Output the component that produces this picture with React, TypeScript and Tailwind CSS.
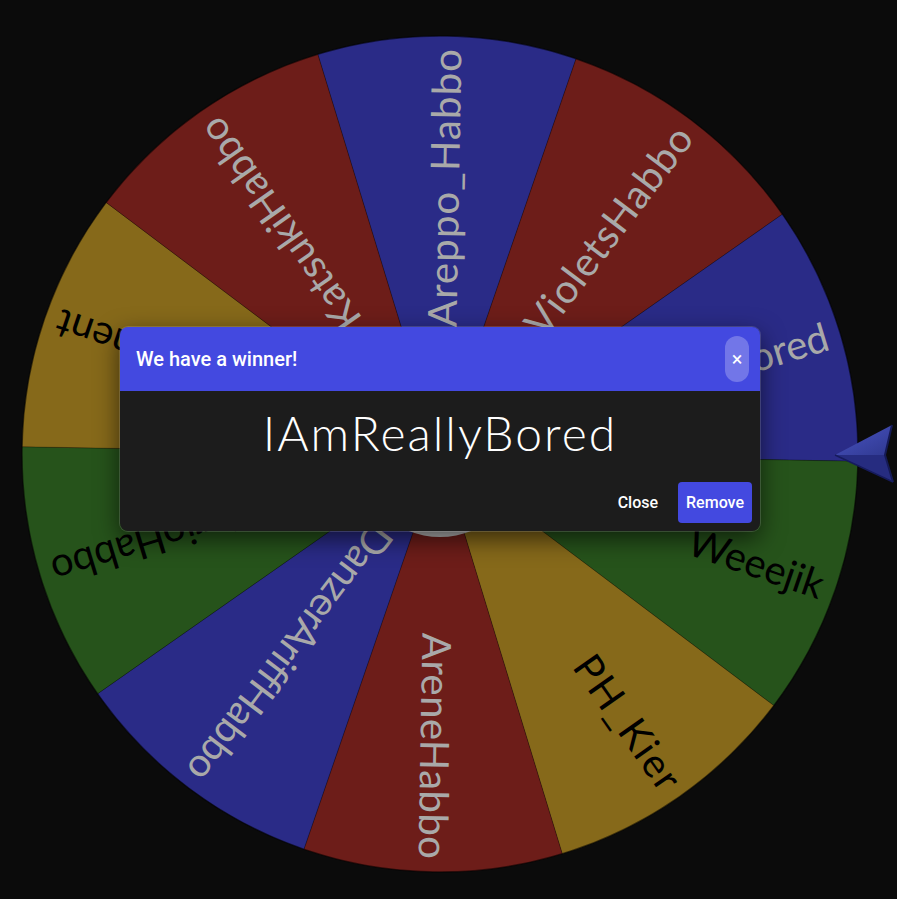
import React from "react";

type Slice = { name: string; fill: string; ink: string; len?: number };

const BLUE = "#2a2b87";
const RED = "#6d1d19";
const GREEN = "#26531b";
const GOLD = "#86691a";
const LIGHT = "#a9a9a9";
const DARK = "#000000";

const slices: Slice[] = [
  { name: "Areppo_Habbo", fill: BLUE, ink: LIGHT, len: 278 },
  { name: "VioletsHabbo", fill: RED, ink: LIGHT, len: 250 },
  { name: "IAmReallyBored", fill: BLUE, ink: LIGHT },
  { name: "Weeejik", fill: GREEN, ink: DARK, len: 141 },
  { name: "PH_Kier", fill: GOLD, ink: DARK, len: 155 },
  { name: "AreneHabbo", fill: RED, ink: LIGHT, len: 226 },
  { name: "DanzerAriffHabbo", fill: BLUE, ink: LIGHT, len: 312 },
  { name: "MarioHabbo", fill: GREEN, ink: DARK },
  { name: "Prominent", fill: GOLD, ink: DARK },
  { name: "KatsukiHabbo", fill: RED, ink: LIGHT, len: 250 },
];

const CX = 440;
const CY = 454;
const R = 418;
const STEP = 360 / slices.length;
const START = 89; // centre angle of the first slice, degrees, counter-clockwise from +x

const pt = (deg: number, r: number) => {
  const a = (deg * Math.PI) / 180;
  return [CX + r * Math.cos(a), CY - r * Math.sin(a)];
};

function Wheel() {
  return (
    <svg
      width={897}
      height={899}
      viewBox="0 0 897 899"
      className="block [font-family:Lato,sans-serif]"
    >
      {slices.map((s, i) => {
        const mid = START - STEP * i;
        const [x1, y1] = pt(mid + STEP / 2, R);
        const [x2, y2] = pt(mid - STEP / 2, R);
        return (
          <path
            key={s.name}
            d={`M${CX} ${CY} L${x1} ${y1} A${R} ${R} 0 0 1 ${x2} ${y2} Z`}
            fill={s.fill}
            stroke="rgba(0,0,0,0.22)"
            strokeWidth={1}
          />
        );
      })}
      {slices.map((s, i) => {
        const mid = START - STEP * i;
        return (
          <text
            key={s.name + "-label"}
            transform={`translate(${CX} ${CY}) rotate(${-mid})`}
            x={405}
            y={0}
            dy="0.36em"
            textAnchor="end"
            fontSize={40}
            fill={s.ink}
            textLength={s.len}
            lengthAdjust="spacing"
          >
            {s.name}
          </text>
        );
      })}
      <circle cx={CX} cy={CY} r={R} fill="none" stroke="rgba(0,0,0,0.4)" strokeWidth={1.5} />
      <circle cx={CX} cy={CY} r={83} fill="#b9b9b9" />

      {/* pointer */}
      <defs>
        <linearGradient id="ptrTop" x1="0" y1="0" x2="1" y2="1">
          <stop offset="0" stopColor="#4a55c4" />
          <stop offset="1" stopColor="#2f388f" />
        </linearGradient>
      </defs>
      <polygon points="835,455 892,425 885,455" fill="url(#ptrTop)" />
      <polygon points="835,455 885,455 893,482" fill="#262c80" />
      <polyline
        points="892,425 885,455 893,482"
        fill="none"
        stroke="#151a55"
        strokeWidth={2}
        strokeLinejoin="round"
      />
      <polyline points="835,455 893,482" fill="none" stroke="#161b5c" strokeWidth={1.5} />
    </svg>
  );
}

function WinnerDialog() {
  return (
    <div className="absolute left-[120px] top-[327px] w-[640px] overflow-hidden rounded-lg shadow-[0_8px_24px_rgba(0,0,0,0.6)] ring-1 ring-white/15 [font-family:Roboto,sans-serif]">
      <div className="flex h-16 items-center justify-between bg-[#4349e0] pl-4">
        <span className="text-xl font-medium text-white">We have a winner!</span>
        <button className="mr-[11px] flex h-[46px] w-6 items-center justify-center rounded-full bg-white/25 text-xl leading-none text-white">
          ×
        </button>
      </div>
      <div className="flex h-[140px] flex-col bg-[#1c1c1c]">
        <div className="pt-[13px] text-center text-[48px] font-light leading-[58px] tracking-[2px] text-white [font-family:Lato,sans-serif]">
          IAmReallyBored
        </div>
        <div className="mt-auto flex justify-end gap-[10px] pb-2 pr-2">
          <button className="h-[41px] px-[10px] text-base font-medium text-white">Close</button>
          <button className="h-[41px] rounded bg-[#4349e0] px-2 text-base font-medium text-white">
            Remove
          </button>
        </div>
      </div>
    </div>
  );
}

export default function App() {
  return (
    <div className="relative h-[899px] w-[897px] overflow-hidden bg-[#0b0b0b]">
      <Wheel />
      <WinnerDialog />
    </div>
  );
}
